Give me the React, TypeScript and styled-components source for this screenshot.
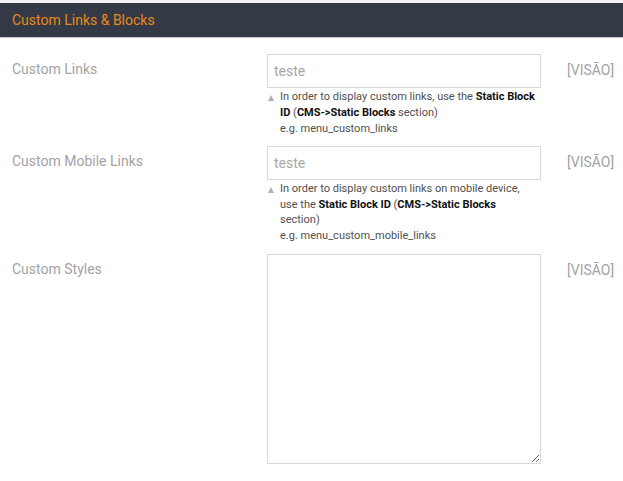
import React from "react";
import styled, { createGlobalStyle } from "styled-components";

const Global = createGlobalStyle`
  html, body { margin: 0; padding: 0; background: #fff; }
  body { font-family: Roboto, "Liberation Sans", sans-serif; }
  * { box-sizing: border-box; }
`;

const Page = styled.div`
  width: 623px;
  border-top: 3px solid #f1f1f6;
`;

const Header = styled.div`
  height: 35px;
  background: #333a45;
  border-bottom: 1px solid #c4c6cb;
  display: flex;
  align-items: center;
  padding: 0 12px 1px;
  color: #e8891c;
  font-size: 14px;
`;

const Form = styled.div`
  display: grid;
  grid-template-columns: 255px 274px 1fr;
  row-gap: 9.5px;
  padding: 16px 10px 0 12px;
`;

const Label = styled.div`
  font-size: 14px;
  color: #a3a3a3;
  line-height: 20px;
  padding-top: 5px;
`;

const Field = styled.div`
  display: flex;
  flex-direction: column;
`;

const Input = styled.input`
  width: 274px;
  height: 34px;
  border: 1px solid #d9d9dc;
  padding: 0 6px;
  font-family: Roboto, "Liberation Sans", sans-serif;
  font-size: 14px;
  color: #555;
  outline: none;
  &::placeholder { color: #a8a8a8; }
`;

const TextArea = styled.textarea`
  width: 274px;
  height: 210px;
  border: 1px solid #d9d9dc;
  padding: 6px;
  font-family: Roboto, "Liberation Sans", sans-serif;
  font-size: 14px;
  outline: none;
  resize: both;
  display: block;
`;

const Note = styled.div`
  position: relative;
  padding: 1px 5px 0 13px;
  font-size: 11px;
  line-height: 15.8px;
  color: #505050;
  &::before {
    content: "";
    position: absolute;
    left: 1px;
    top: 7px;
    border-left: 3.5px solid transparent;
    border-right: 3.5px solid transparent;
    border-bottom: 6px solid #a9b3bb;
  }
  b { color: #111; font-weight: 700; }
`;

const Scope = styled.div`
  font-size: 14px;
  color: #a3a3a3;
  line-height: 20px;
  padding: 6px 0 0 26px;
  white-space: nowrap;
`;

export default function App() {
  return (
    <Page>
      <Global />
      <Header>Custom Links &amp; Blocks</Header>
      <Form>
        <Label>Custom Links</Label>
        <Field>
          <Input placeholder="teste" />
          <Note>
            In order to display custom links, use the <b>Static Block ID</b> (<b>CMS-&gt;Static Blocks</b> section)
            <br />
            e.g. menu_custom_links
          </Note>
        </Field>
        <Scope>[VISÃO]</Scope>

        <Label>Custom Mobile Links</Label>
        <Field>
          <Input placeholder="teste" />
          <Note>
            In order to display custom links on mobile device, use the <b>Static Block ID</b> (<b>CMS-&gt;Static Blocks</b> section)
            <br />
            e.g. menu_custom_mobile_links
          </Note>
        </Field>
        <Scope>[VISÃO]</Scope>

        <Label>Custom Styles</Label>
        <Field>
          <TextArea />
        </Field>
        <Scope>[VISÃO]</Scope>
      </Form>
    </Page>
  );
}
